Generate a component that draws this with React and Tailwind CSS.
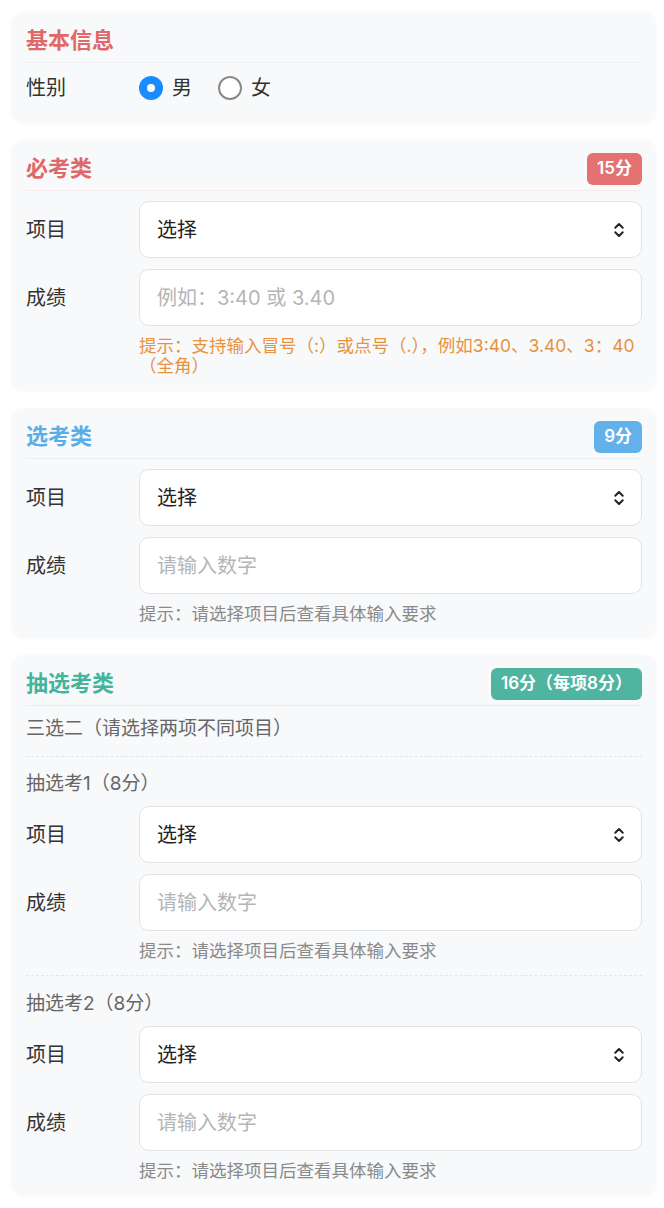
import { ChevronsUpDown } from 'lucide-react';

const FONT = { fontFamily: '"Inter", "Noto Sans CJK SC", sans-serif' };

function Card({ title, titleColor, badge, badgeColor, lineColor, children, className = '' }) {
  return (
    <div className={`rounded-xl bg-[#f8f9fa] px-[14px] pt-[13px] shadow-[0_1px_4px_rgba(0,0,0,0.04)] ${className}`}>
      {/* Header */}
      <div className={`flex h-[38px] items-start justify-between border-b pb-[6px] ${lineColor}`}>
        <h2 className={`text-[22px] font-bold leading-[31px] ${titleColor}`}>{title}</h2>
        {badge && (
          <span className={`flex h-[32px] items-center rounded-md px-[10px] text-[17px] font-semibold text-white ${badgeColor}`}>
            {badge}
          </span>
        )}
      </div>
      {children}
    </div>
  );
}

function SelectRow() {
  return (
    <div className="flex items-center">
      <span className="w-[113px] shrink-0 text-[20px] text-[#333]">项目</span>
      <div className="flex h-[57px] flex-1 items-center justify-between rounded-[10px] border border-[#e3e3e3] bg-white pl-[17px] pr-[13px]">
        <span className="text-[20px] text-[#222]">选择</span>
        <ChevronsUpDown size={18} strokeWidth={2.6} className="text-[#222]" />
      </div>
    </div>
  );
}

function ScoreRow({ placeholder }) {
  return (
    <div className="mt-[11px] flex items-center">
      <span className="w-[113px] shrink-0 text-[20px] text-[#333]">成绩</span>
      <div className="flex h-[57px] flex-1 items-center rounded-[10px] border border-[#e3e3e3] bg-white pl-[17px]">
        <span className="text-[20px] text-[#b5b5b5]">{placeholder}</span>
      </div>
    </div>
  );
}

function Hint({ children, color = 'text-[#8a8a8a]' }) {
  return <p className={`ml-[113px] mt-[10px] text-[17.5px] leading-[20px] ${color}`}>{children}</p>;
}

export default function App() {
  return (
    <div className="min-h-screen bg-white pb-4 pl-3 pr-2 pt-3" style={FONT}>
      <div className="flex flex-col gap-[18px]">
        {/* 基本信息 */}
        <Card title="基本信息" titleColor="text-[#e06868]" lineColor="border-[#efefef]" className="pb-[19px]">
          <div className="mt-[10px] flex h-[30px] items-center">
            <span className="w-[113px] shrink-0 text-[20px] text-[#333]">性别</span>
            <label className="flex items-center gap-[9px]">
              <span className="flex h-[24px] w-[24px] items-center justify-center rounded-full bg-[#1a8cff]">
                <span className="h-[8px] w-[8px] rounded-full bg-white" />
              </span>
              <span className="text-[20px] text-[#333]">男</span>
            </label>
            <label className="ml-[26px] flex items-center gap-[9px]">
              <span className="h-[24px] w-[24px] rounded-full border-2 border-[#8a8a8a] bg-white" />
              <span className="text-[20px] text-[#333]">女</span>
            </label>
          </div>
        </Card>

        {/* 必考类 */}
        <Card
          title="必考类"
          titleColor="text-[#e06868]"
          badge="15分"
          badgeColor="bg-[#e47272]"
          lineColor="border-[#f6e9e9]"
          className="pb-[14px]"
        >
          <div className="mt-[10px]">
            <SelectRow />
            <ScoreRow placeholder="例如：3:40 或 3.40" />
            <Hint color="text-[#e8923e]">提示：支持输入冒号（:）或点号（.），例如3:40、3.40、3：40（全角）</Hint>
          </div>
        </Card>

        {/* 选考类 */}
        <Card
          title="选考类"
          titleColor="text-[#5aaee8]"
          badge="9分"
          badgeColor="bg-[#62b1ea]"
          lineColor="border-[#e8eef3]"
          className="pb-[13px]"
        >
          <div className="mt-[10px]">
            <SelectRow />
            <ScoreRow placeholder="请输入数字" />
            <Hint>提示：请选择项目后查看具体输入要求</Hint>
          </div>
        </Card>

        {/* 抽选考类 */}
        <Card
          title="抽选考类"
          titleColor="text-[#45b49c]"
          badge="16分（每项8分）"
          badgeColor="bg-[#4fb5a0]"
          lineColor="border-[#e6efec]"
          className="pb-[14px]"
        >
          <p className="mt-[10px] border-b border-dashed border-[#e6e6e6] pb-[14px] text-[19px] leading-[26px] text-[#666]">
            三选二（请选择两项不同项目）
          </p>

          <div className="border-b border-dashed border-[#e6e6e6] pb-[14px] pt-[14px]">
            <p className="mb-[9px] text-[19px] leading-[26px] text-[#666]">抽选考1（8分）</p>
            <SelectRow />
            <ScoreRow placeholder="请输入数字" />
            <Hint>提示：请选择项目后查看具体输入要求</Hint>
          </div>

          <div className="pt-[15px]">
            <p className="mb-[9px] text-[19px] leading-[26px] text-[#666]">抽选考2（8分）</p>
            <SelectRow />
            <ScoreRow placeholder="请输入数字" />
            <Hint>提示：请选择项目后查看具体输入要求</Hint>
          </div>
        </Card>
      </div>
    </div>
  );
}
